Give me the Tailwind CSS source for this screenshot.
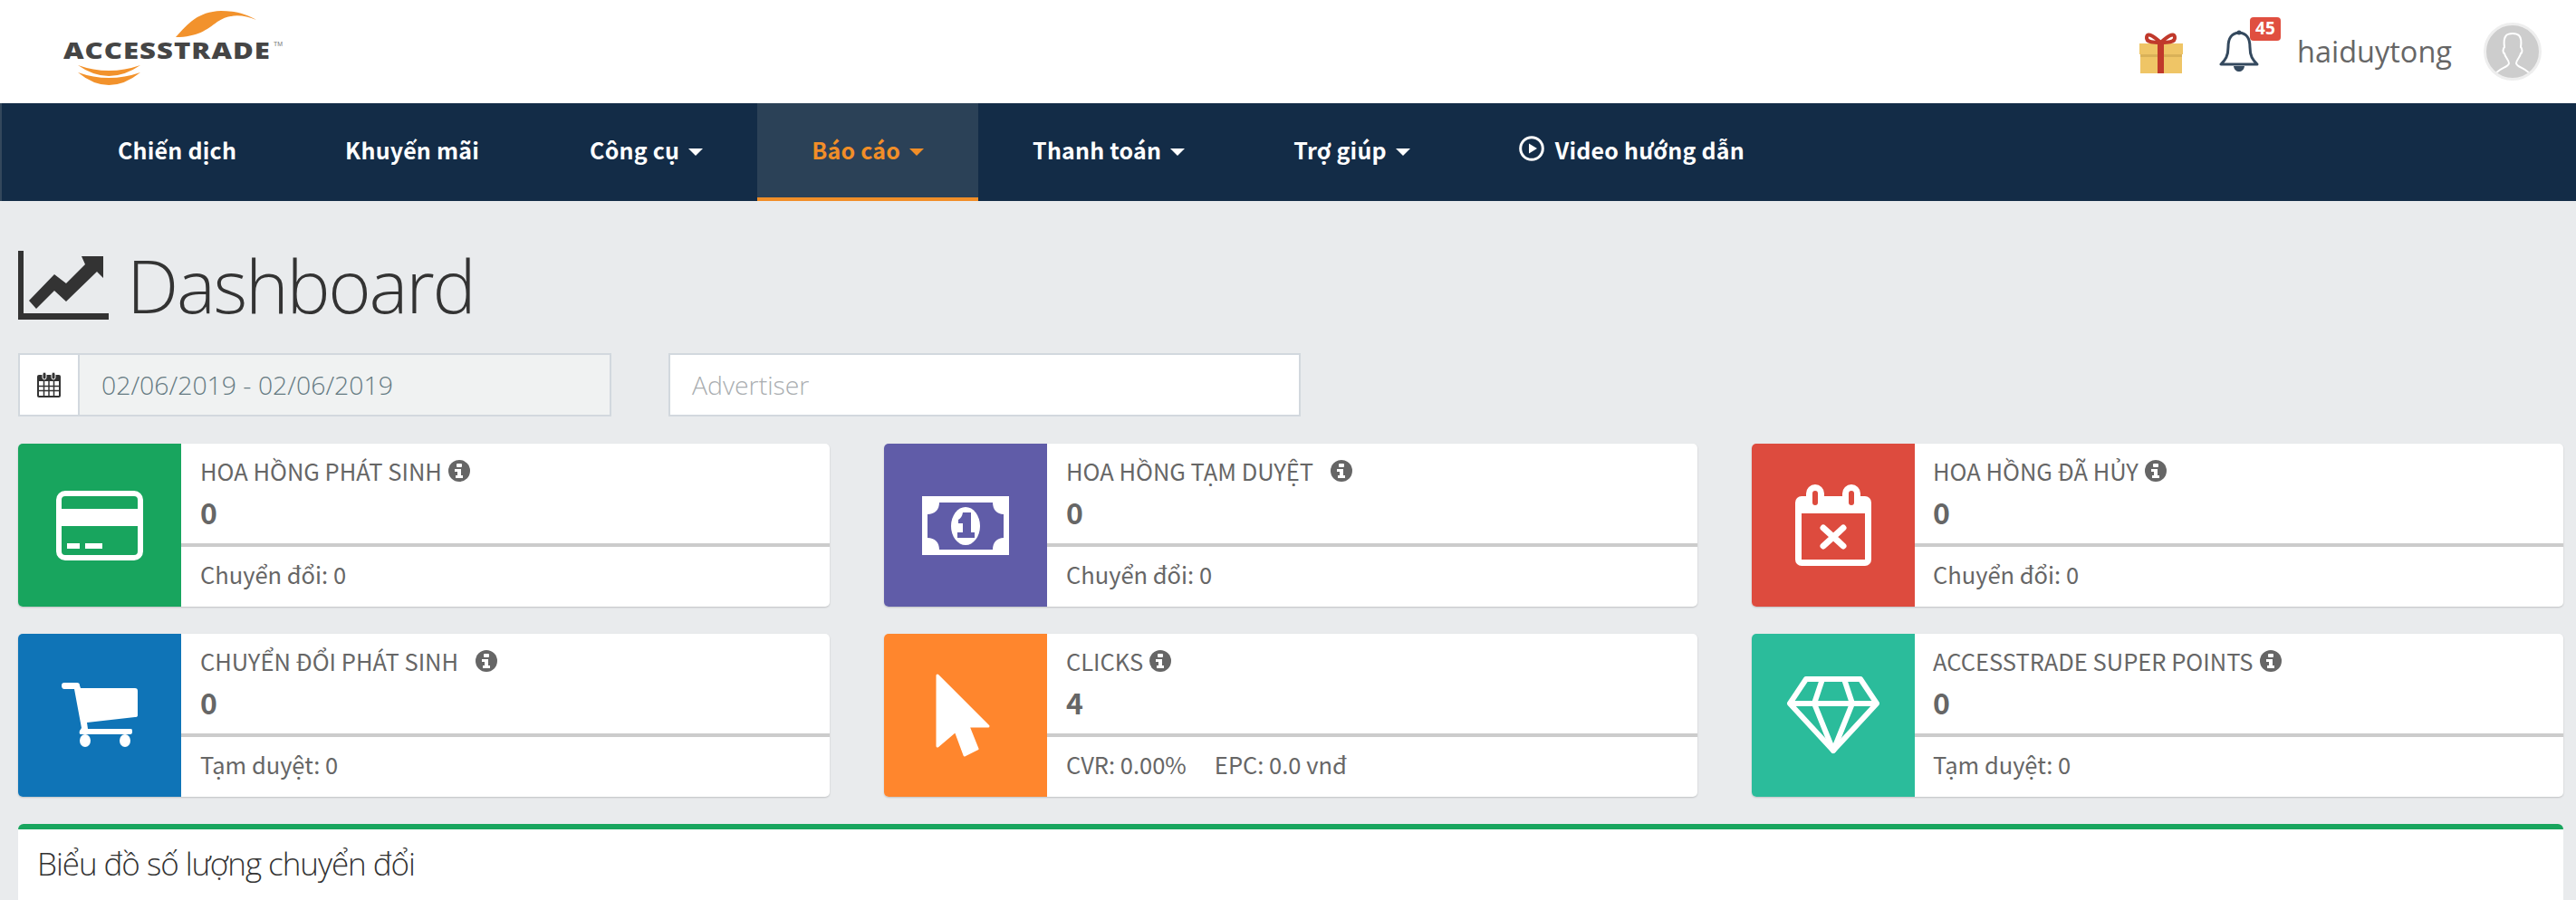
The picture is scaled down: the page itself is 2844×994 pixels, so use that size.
<!DOCTYPE html>
<html lang="vi">
<head>
  <meta charset="UTF-8" />
  <title>Accesstrade Dashboard</title>
  <script src="https://cdn.jsdelivr.net/npm/@tailwindcss/browser@4"></script>
</head>
<body class="bg-[#e9ebed] h-[994px] overflow-hidden font-['Noto_Sans_CJK_SC','Open_Sans',sans-serif] text-[#666666]">

<!-- Top bar -->
<header class="h-[114px] bg-white flex items-center justify-between pl-[68px] pr-[38px]">
  <div class="relative w-[246px] h-[114px]">
    <svg class="absolute left-0 top-0" width="246" height="114" viewBox="0 0 246 114">
      <path d="M126 41 C 140 26 150 13 176 12 C 192 12 205 16 215 22 C 200 16 186 15 172 24 C 160 33 150 41 126 41Z" fill="#f2922c"/>
      <path d="M18 72 Q 52 84 87 72 Q 52 96 18 72Z" fill="#f2922c"/>
      <path d="M18 80 Q 52 92 87 80 Q 52 108 18 80Z" fill="#f2922c"/>
    </svg>
    <span class="absolute left-[2px] top-[38px] origin-left scale-x-[1.245] font-['Open_Sans'] font-extrabold text-[25px] leading-[34px] text-[#454545] tracking-[0.8px]">ACCESSTRADE</span>
    <span class="absolute left-[234px] top-[45px] font-['Liberation_Sans'] text-[7px] leading-[8px] text-[#777777]">TM</span>
  </div>
  <div class="flex items-center">
    <svg width="48" height="48" viewBox="0 0 48 48">
      <rect x="1" y="15" width="46" height="33" fill="#efc566"/>
      <rect y="15" width="48" height="12" fill="#efc566"/>
      <rect x="1" y="27" width="46" height="3" fill="#d9b158"/>
      <rect x="20" y="15" width="7" height="33" fill="#c0392b"/>
      <path d="M23.500 14 C 17 8 9 2 8 8 C 7 14 17 14 23.500 14 C 30 14 40 14 39 8 C 38 2 30 8 23.500 14Z" fill="none" stroke="#c0392b" stroke-width="4"/>
    </svg>
    <div class="relative ml-[40px] w-[44px] h-[48px]">
      <svg width="44" height="48" viewBox="0 0 44 48" fill="none">
        <path d="M22 3 C 12 4 10 11 10 19 C 10 29 7 33 2 38 H 42 C 37 33 34 29 34 19 C 34 11 32 4 22 3Z" stroke="#34495e" stroke-width="3" stroke-linejoin="round"/>
        <circle cx="22" cy="3" r="2.500" fill="#34495e"/>
        <path d="M16 40 C 17 48 27 48 28 40Z" fill="#34495e"/>
      </svg>
      <span class="absolute left-[34px] top-[-14px] w-[34px] h-[26px] rounded-[4px] bg-[#e04f40] text-white text-[19px] leading-[25px] font-bold text-center font-['Open_Sans']">45</span>
    </div>
    <span class="ml-[42px] font-['Open_Sans'] text-[#666666] text-[32.500px] leading-[40px]">haiduytong</span>
    <div class="ml-[35px] w-[64px] h-[64px] rounded-full bg-[#cdcdcd] border-[3px] border-[#eeeeee] overflow-hidden">
      <svg width="58" height="58" viewBox="0 0 58 58" fill="none">
        <path d="M9 56 C 12 47 24 47 25 42 C 25 38 21 36 20 31 C 18 30 18 26 20 24 C 18 10 24 9 29 9 C 34 9 40 10 38 24 C 40 26 40 30 38 31 C 37 36 33 38 33 42 C 34 47 46 47 49 56" stroke="#ffffff" stroke-width="2"/>
      </svg>
    </div>
  </div>
</header>

<!-- Main nav -->
<nav class="h-[108px] bg-[#132c47] border-l-2 border-[#33475c] flex pl-[68px] text-white font-bold text-[25px] tracking-[0.2px]">
  <a class="px-[60px] pb-[4px] flex items-center">Chiến dịch</a>
  <a class="pl-[60px] pr-[62px] pb-[4px] flex items-center">Khuyến mãi</a>
  <a class="px-[60px] pb-[4px] flex items-center">Công cụ<i class="ml-[10px] mt-[3px] border-x-[8px] border-x-transparent border-t-[8px] border-t-white"></i></a>
  <a class="px-[60px] flex items-center bg-[#2b4157] text-[#f18e28] border-b-4 border-[#f18e28]">Báo cáo<i class="ml-[10px] mt-[3px] border-x-[8px] border-x-transparent border-t-[8px] border-t-[#f18e28]"></i></a>
  <a class="px-[60px] pb-[4px] flex items-center">Thanh toán<i class="ml-[10px] mt-[3px] border-x-[8px] border-x-transparent border-t-[8px] border-t-white"></i></a>
  <a class="px-[60px] pb-[4px] flex items-center">Trợ giúp<i class="ml-[10px] mt-[3px] border-x-[8px] border-x-transparent border-t-[8px] border-t-white"></i></a>
  <a class="px-[60px] pb-[4px] flex items-center">
    <svg class="mr-[12px] mb-[4px]" width="28" height="28" viewBox="0 0 28 28" fill="none"><circle cx="14" cy="14" r="12.300" stroke="white" stroke-width="3"/><path d="M11 8.500 L20 14 L11 19.500Z" fill="white"/></svg>
    Video hướng dẫn
  </a>
</nav>

<main class="pl-[20px] pr-[14px]">
  <!-- Page title -->
  <div class="h-[168px] flex items-center pt-[18px]">
    <svg width="100" height="76" viewBox="0 0 100 76" fill="#333333">
      <path d="M0 0 H6 V69 H100 V76 H0Z"/>
      <path d="M12 55 L40 26 L53 36 L74 15 L70 6 H94 V30 L87 23 L53 56 L40 44 L20 64Z"/>
    </svg>
    <h1 class="ml-[20px] font-['Open_Sans'] font-light text-[#333333] text-[81px] leading-[100px] tracking-[-2.300px]">Dashboard</h1>
  </div>

  <!-- Filters -->
  <div class="flex h-[70px] font-['Open_Sans'] font-light text-[28.400px]">
    <div class="w-[655px] flex border-2 border-[#d2d8de]">
      <div class="w-[66px] bg-white border-r-2 border-[#d2d8de] flex items-center justify-center">
        <svg width="26" height="28" viewBox="0 0 26 28">
          <rect x="0" y="3" width="26" height="25" rx="2" fill="#333333"/>
          <rect x="6" y="0" width="4" height="8" rx="2" fill="#333333" stroke="#ffffff"/>
          <rect x="16" y="0" width="4" height="8" rx="2" fill="#333333" stroke="#ffffff"/>
          <path d="M2 10H24V26H2Z" fill="#ffffff"/>
          <path d="M7.500 10V26M13 10V26M18.500 10V26M2 15.500H24M2 20.500H24" stroke="#333333" stroke-width="1.500"/>
        </svg>
      </div>
      <div class="flex-1 bg-[#f0f2f2] flex items-center pl-[24px] text-[#657a82]">02/06/2019 - 02/06/2019</div>
    </div>
    <div class="ml-[63px] w-[698px] bg-white border-2 border-[#d2d8de] flex items-center pl-[24px] text-[#a9adb0]">Advertiser</div>
  </div>

  <!-- Stat cards -->
  <div class="mt-[30px] grid grid-cols-[896px_898px_896px] gap-x-[60px] gap-y-[30px] text-[25.500px] leading-[36px]">
    <div class="h-[180px] flex bg-white rounded-[5px] shadow-[0_1px_2px_rgba(0,0,0,0.18)] overflow-hidden">
      <div class="w-[180px] bg-[#18a55e] flex items-center justify-center">
        <svg width="96" height="77" viewBox="0 0 96 77" fill="none">
          <rect x="3" y="3" width="90" height="71" rx="7" stroke="white" stroke-width="6"/>
          <rect x="3" y="20" width="90" height="19" fill="white"/>
          <rect x="12" y="58" width="14" height="6" fill="white"/><rect x="32" y="58" width="19" height="6" fill="white"/>
        </svg>
      </div>
      <div class="flex-1 flex flex-col">
        <div class="h-[114px] border-b-4 border-[#cccccc] pl-[21px] pt-[12px]">
          <div class="flex items-center">HOA HỒNG PHÁT SINH<svg class="ml-[7px]" width="24" height="24" viewBox="0 0 24 24"><circle cx="12" cy="12" r="12" fill="#666666"/><rect x="9" y="4" width="6" height="4" rx="1" fill="#ffffff"/><path d="M7 10H14V17H16V20H8V17H10V13H7Z" fill="#ffffff"/></svg></div>
          <div class="mt-[7px] font-bold text-[32px] leading-[40px]">0</div>
        </div>
        <div class="pl-[21px] pt-[12px]">Chuyển đổi: 0</div>
      </div>
    </div>

    <div class="h-[180px] flex bg-white rounded-[5px] shadow-[0_1px_2px_rgba(0,0,0,0.18)] overflow-hidden">
      <div class="w-[180px] bg-[#605ca8] flex items-center justify-center">
        <svg width="96" height="65" viewBox="0 0 96 65">
          <path fill-rule="evenodd" d="M0 0H96V65H0ZM19 7C19 15 14 20 6 20V46C14 46 19 51 19 59H78C78 51 83 46 90 46V20C83 20 78 15 78 7Z" fill="white"/>
          <ellipse cx="48" cy="33" rx="16" ry="21" fill="white"/>
          <path d="M45 18H54V40H58V46H39V40H45V30H40V26Q44 24 45 18Z" fill="#605ca8"/>
        </svg>
      </div>
      <div class="flex-1 flex flex-col">
        <div class="h-[114px] border-b-4 border-[#cccccc] pl-[21px] pt-[12px]">
          <div class="flex items-center">HOA HỒNG TẠM DUYỆT<svg class="ml-[19px]" width="24" height="24" viewBox="0 0 24 24"><circle cx="12" cy="12" r="12" fill="#666666"/><rect x="9" y="4" width="6" height="4" rx="1" fill="#ffffff"/><path d="M7 10H14V17H16V20H8V17H10V13H7Z" fill="#ffffff"/></svg></div>
          <div class="mt-[7px] font-bold text-[32px] leading-[40px]">0</div>
        </div>
        <div class="pl-[21px] pt-[12px]">Chuyển đổi: 0</div>
      </div>
    </div>

    <div class="h-[180px] flex bg-white rounded-[5px] shadow-[0_1px_2px_rgba(0,0,0,0.18)] overflow-hidden">
      <div class="w-[180px] bg-[#dd4b3e] flex items-center justify-center">
        <svg width="84" height="90" viewBox="0 0 84 90">
          <rect x="0" y="13" width="84" height="77" rx="7" fill="white"/>
          <rect x="7" y="32" width="70" height="51" fill="#dd4b3e"/>
          <rect x="12" y="0" width="20" height="28" rx="10" fill="white"/><rect x="19" y="7" width="6" height="16" rx="3" fill="#dd4b3e"/>
          <rect x="52" y="0" width="20" height="28" rx="10" fill="white"/><rect x="59" y="7" width="6" height="16" rx="3" fill="#dd4b3e"/>
          <path d="M31 48L53 68M53 48L31 68" stroke="white" stroke-width="7" stroke-linecap="round"/>
        </svg>
      </div>
      <div class="flex-1 flex flex-col">
        <div class="h-[114px] border-b-4 border-[#cccccc] pl-[20px] pt-[12px]">
          <div class="flex items-center">HOA HỒNG ĐÃ HỦY<svg class="ml-[7px]" width="24" height="24" viewBox="0 0 24 24"><circle cx="12" cy="12" r="12" fill="#666666"/><rect x="9" y="4" width="6" height="4" rx="1" fill="#ffffff"/><path d="M7 10H14V17H16V20H8V17H10V13H7Z" fill="#ffffff"/></svg></div>
          <div class="mt-[7px] font-bold text-[32px] leading-[40px]">0</div>
        </div>
        <div class="pl-[20px] pt-[12px]">Chuyển đổi: 0</div>
      </div>
    </div>

    <div class="h-[180px] flex bg-white rounded-[5px] shadow-[0_1px_2px_rgba(0,0,0,0.18)] overflow-hidden">
      <div class="w-[180px] bg-[#0f74b7] flex items-center justify-center">
        <svg width="84" height="72" viewBox="0 0 84 72" fill="white">
          <path d="M3 0H17Q20 0 20 3L21 6H81Q84 6 84 9V36Q84 38 81 38L28 44L29 51H77Q78 51 78 54Q78 57 76 57H21Q19 57 20 53L22 50L14 7H3Q0 7 0 3Q0 0 3 0Z"/>
          <ellipse cx="26" cy="64" rx="6" ry="7"/><ellipse cx="70" cy="64" rx="6" ry="7"/>
        </svg>
      </div>
      <div class="flex-1 flex flex-col">
        <div class="h-[114px] border-b-4 border-[#cccccc] pl-[21px] pt-[12px]">
          <div class="flex items-center">CHUYỂN ĐỔI PHÁT SINH<svg class="ml-[19px]" width="24" height="24" viewBox="0 0 24 24"><circle cx="12" cy="12" r="12" fill="#666666"/><rect x="9" y="4" width="6" height="4" rx="1" fill="#ffffff"/><path d="M7 10H14V17H16V20H8V17H10V13H7Z" fill="#ffffff"/></svg></div>
          <div class="mt-[7px] font-bold text-[32px] leading-[40px]">0</div>
        </div>
        <div class="pl-[21px] pt-[12px]">Tạm duyệt: 0</div>
      </div>
    </div>

    <div class="h-[180px] flex bg-white rounded-[5px] shadow-[0_1px_2px_rgba(0,0,0,0.18)] overflow-hidden">
      <div class="w-[180px] bg-[#ff862d] flex items-center justify-center">
        <svg class="mr-[6px]" width="60" height="92" viewBox="0 0 60 92" fill="white" stroke="white" stroke-width="3" stroke-linejoin="round">
          <path d="M2 2V80L22 63L32 90L46 83L36 58H58Z"/>
        </svg>
      </div>
      <div class="flex-1 flex flex-col">
        <div class="h-[114px] border-b-4 border-[#cccccc] pl-[21px] pt-[12px]">
          <div class="flex items-center">CLICKS<svg class="ml-[7px]" width="24" height="24" viewBox="0 0 24 24"><circle cx="12" cy="12" r="12" fill="#666666"/><rect x="9" y="4" width="6" height="4" rx="1" fill="#ffffff"/><path d="M7 10H14V17H16V20H8V17H10V13H7Z" fill="#ffffff"/></svg></div>
          <div class="mt-[7px] font-bold text-[32px] leading-[40px]">4</div>
        </div>
        <div class="pl-[21px] pt-[12px] flex gap-[31px]"><span>CVR: 0.00%</span><span>EPC: 0.0 vnđ</span></div>
      </div>
    </div>

    <div class="h-[180px] flex bg-white rounded-[5px] shadow-[0_1px_2px_rgba(0,0,0,0.18)] overflow-hidden">
      <div class="w-[180px] bg-[#2bbc9b] flex items-center justify-center">
        <svg width="104" height="86" viewBox="0 0 104 86" fill="none" stroke="white" stroke-width="6" stroke-linejoin="round">
          <path d="M22 3H82L100 30L52 82L4 30Z"/>
          <path d="M4 30H100M40 3L31 30L52 82L73 30L64 3"/>
        </svg>
      </div>
      <div class="flex-1 flex flex-col">
        <div class="h-[114px] border-b-4 border-[#cccccc] pl-[20px] pt-[12px]">
          <div class="flex items-center">ACCESSTRADE SUPER POINTS<svg class="ml-[7px]" width="24" height="24" viewBox="0 0 24 24"><circle cx="12" cy="12" r="12" fill="#666666"/><rect x="9" y="4" width="6" height="4" rx="1" fill="#ffffff"/><path d="M7 10H14V17H16V20H8V17H10V13H7Z" fill="#ffffff"/></svg></div>
          <div class="mt-[7px] font-bold text-[32px] leading-[40px]">0</div>
        </div>
        <div class="pl-[20px] pt-[12px]">Tạm duyệt: 0</div>
      </div>
    </div>
  </div>

  <!-- Chart panel -->
  <section class="mt-[30px] h-[84px] bg-white rounded-t-[6px] border-t-[6px] border-[#18a55e] px-[21px] pt-[14px]">
    <h2 class="font-['Open_Sans'] font-light text-[35px] leading-[48px] tracking-[-1.050px] text-[#333333]">Biểu đồ số lượng chuyển đổi</h2>
  </section>
</main>

</body>
</html>
